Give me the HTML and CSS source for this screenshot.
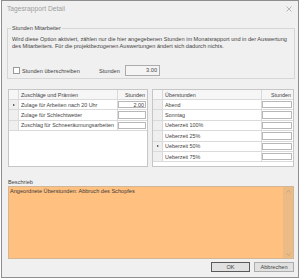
FILE: index.html
```html
<!DOCTYPE html>
<html lang="de">
<head>
<meta charset="utf-8">
<title>Tagesrapport Detail</title>
<link rel="stylesheet" href="styles.css">
</head>
<body>
<div class="win">
  <div class="titlebar">
    <span class="title">Tagesrapport Detail</span>
    <svg class="close" width="6" height="6" viewBox="0 0 6 6"><path d="M0.5 0.5 L5.5 5.5 M5.5 0.5 L0.5 5.5" stroke="#a8a8a8" stroke-width="0.8" fill="none"/></svg>
  </div>
  <div class="content">
    <div class="group">
      <span class="legend">Stunden Mitarbeiter</span>
      <p class="desc">Wird diese Option aktiviert, zählen nur die hier angegebenen Stunden im Monatsrapport und in der Auswertung<br>des Mitarbeiters. Für die projektbezogenen Auswertungen ändert sich dadurch nichts.</p>
      <div class="override">
        <label class="chk"><span class="box"></span><span>Stunden überschreiben</span></label>
        <span class="lbl">Stunden</span>
        <span class="numbox">3.00</span>
      </div>
    </div>

    <div class="tables">
      <div class="grid grid-left">
        <div class="rh hd"></div><div class="cell hd">Zuschläge und Prämien</div><div class="cell hd num">Stunden</div>
        <div class="rh"><span class="sel"></span></div><div class="cell">Zulage für Arbeiten nach 20 Uhr</div><div class="cell val"><span class="in">2.00</span></div>
        <div class="rh"></div><div class="cell">Zulage für Schlechtwetter</div><div class="cell val"><span class="in"></span></div>
        <div class="rh"></div><div class="cell">Zuschlag für Schneeräumungsarbeiten</div><div class="cell val"><span class="in"></span></div>
      </div>
      <div class="grid grid-right">
        <div class="rh hd"></div><div class="cell hd">Überstunden</div><div class="cell hd num">Stunden</div>
        <div class="rh"></div><div class="cell">Abend</div><div class="cell val"><span class="in"></span></div>
        <div class="rh"></div><div class="cell">Sonntag</div><div class="cell val"><span class="in"></span></div>
        <div class="rh"></div><div class="cell">Ueberzeit 100%</div><div class="cell val"><span class="in"></span></div>
        <div class="rh"></div><div class="cell">Ueberzeit 25%</div><div class="cell val"><span class="in"></span></div>
        <div class="rh"><span class="sel"></span></div><div class="cell">Ueberzeit 50%</div><div class="cell val"><span class="in"></span></div>
        <div class="rh"></div><div class="cell">Ueberzeit 75%</div><div class="cell val"><span class="in"></span></div>
      </div>
    </div>

    <div class="field-label">Beschrieb</div>
    <div class="memo">
      <div class="memo-text">Angeordnete Überstunden: Abbruch des Schopfes</div>
      <div class="vscroll">
        <svg width="5" height="3" viewBox="0 0 5 3"><path d="M0.5 2.5 L2.5 0.5 L4.5 2.5" stroke="#b79a7c" stroke-width="0.7" fill="none"/></svg>
        <svg width="5" height="3" viewBox="0 0 5 3"><path d="M0.5 0.5 L2.5 2.5 L4.5 0.5" stroke="#b79a7c" stroke-width="0.7" fill="none"/></svg>
      </div>
    </div>

    <div class="buttons">
      <button class="btn btn-default">OK</button>
      <button class="btn">Abbrechen</button>
    </div>
  </div>
</div>
</body>
</html>
```
FILE: styles.css
```css
html, body {
  margin: 0;
  padding: 0;
  background: #ffffff;
}
body {
  width: 300px;
  height: 280px;
  overflow: hidden;
}
.win {
  margin-left: 1px;
  width: 298px;
  height: 278px;
  box-sizing: border-box;
  border: 1px solid #8e8e8e;
  background: #f0f0f0;
  display: flex;
  flex-direction: column;
  font-family: "Liberation Sans", Arial, sans-serif;
  font-size: 5.6px;
  color: #444444;
}
.titlebar {
  height: 21px;
  display: flex;
  align-items: flex-start;
  padding: 4px 6px 0 5px;
  box-sizing: border-box;
}
.title {
  font-size: 6.7px;
  line-height: 8px;
  color: #9c9c9c;
}
.close {
  margin-left: auto;
  margin-top: 1px;
}
.content {
  padding: 0 4px 0 6px;
  display: flex;
  flex-direction: column;
}
.group {
  margin: 6px -1px 0 -1px;
  border: 1px solid #d6d6d6;
  padding: 0 4px 2px 4px;
}
.legend {
  display: block;
  width: max-content;
  margin: -4px 0 0 -1px;
  padding: 0 1px;
  line-height: 7px;
  background: #f0f0f0;
}
.desc {
  margin: 4px 0 0 0;
  line-height: 7px;
}
.override {
  margin-top: 15px;
  height: 11px;
  display: flex;
  align-items: center;
}
.chk {
  width: 87px;
  display: flex;
  align-items: center;
}
.box {
  width: 7px;
  height: 7px;
  box-sizing: border-box;
  border: 1px solid #9a9a9a;
  background: #fff;
  margin: 0 2px 0 1px;
}
.lbl {
  width: 26px;
}
.numbox {
  width: 35px;
  height: 11px;
  box-sizing: border-box;
  border: 1px solid #acacac;
  background: #f4f4f4;
  text-align: right;
  padding-right: 2px;
  line-height: 9px;
}
.tables {
  margin-top: 10px;
  display: flex;
  gap: 4px;
}
.grid {
  height: 78px;
  box-sizing: border-box;
  border: 1px solid #c6c6c6;
  background: #fff;
  display: grid;
  grid-template-rows: 10px;
  grid-auto-rows: 10.4px;
  align-content: start;
  font-size: 5.4px;
}
.grid-left {
  width: 140px;
  grid-template-columns: 10px 99px 29px;
}
.grid-right {
  width: 142px;
  grid-template-columns: 10px 99px 31px;
}
.rh, .cell {
  box-sizing: border-box;
  border-right: 1px solid #dadada;
  border-bottom: 1px solid #dadada;
  display: flex;
  align-items: center;
  overflow: hidden;
  white-space: nowrap;
}
.rh {
  background: #efefef;
  justify-content: center;
}
.cell {
  padding-left: 2px;
}
.hd {
  background: #f6f6f6;
}
.grid .cell:nth-child(3n) {
  border-right: none;
}
.num {
  justify-content: flex-end;
  padding-right: 2px;
}
.val {
  padding: 1px 1px 1px 0;
  align-items: stretch;
}
.in {
  flex: 1;
  box-sizing: border-box;
  border: 1px solid #b8b8b8;
  background: #fff;
  text-align: right;
  padding-right: 1px;
  line-height: 6px;
}
.sel {
  width: 0;
  height: 0;
  border-top: 1.5px solid transparent;
  border-bottom: 1.5px solid transparent;
  border-left: 2px solid #333;
}
.field-label {
  margin-top: 12px;
  line-height: 7px;
}
.memo {
  height: 73px;
  box-sizing: border-box;
  border: 1px solid #d2b696;
  background: #ffc080;
  display: flex;
}
.memo-text {
  flex: 1;
  padding: 1px 0 0 1px;
  line-height: 7px;
  color: #3a3a3a;
}
.vscroll {
  width: 10px;
  background: #ebbb86;
  display: flex;
  flex-direction: column;
  justify-content: space-between;
  align-items: center;
  padding: 3px 0 2px;
}
.buttons {
  margin-top: 3px;
  display: flex;
  justify-content: flex-end;
  gap: 4px;
}
.btn {
  height: 10px;
  box-sizing: border-box;
  border: 1px solid #adadad;
  background: #e1e1e1;
  font-family: "Liberation Sans", Arial, sans-serif;
  font-size: 5.6px;
  color: #444444;
  padding: 0;
  line-height: 8px;
  width: 40px;
}
.btn-default {
  width: 39px;
  border-color: #5a5a5a;
}
```
